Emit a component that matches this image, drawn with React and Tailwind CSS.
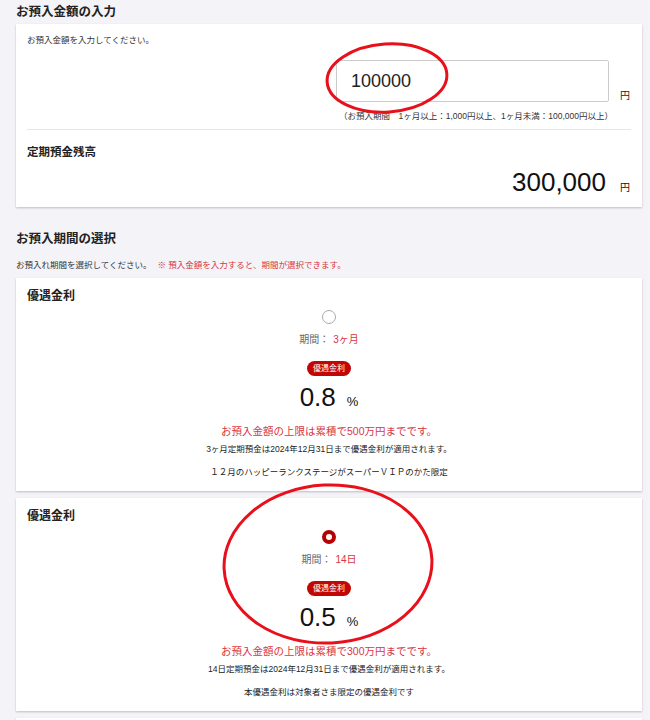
import React from "react";

const font = "font-['Liberation_Sans','Noto_Sans_CJK_JP',sans-serif]";

const plans = [
  {
    period: "3ヶ月",
    rate: "0.8",
    selected: false,
    limit: "お預入金額の上限は累積で500万円までです。",
    note: "3ヶ月定期預金は2024年12月31日まで優遇金利が適用されます。",
    target: "１２月のハッピーランクステージがスーパーＶＩＰのかた限定",
  },
  {
    period: "14日",
    rate: "0.5",
    selected: true,
    limit: "お預入金額の上限は累積で300万円までです。",
    note: "14日定期預金は2024年12月31日まで優遇金利が適用されます。",
    target: "本優遇金利は対象者さま限定の優遇金利です",
  },
];

function Card({ className = "", children }) {
  return (
    <div className={`bg-white shadow-[0_1px_2px_rgba(0,0,0,0.22)] ${className}`}>
      {children}
    </div>
  );
}

function PlanCard({ plan }) {
  return (
    <Card className="h-[213px] px-[11px] pt-[10px]">
      <h3 className="text-[12px] leading-[16px] font-bold text-[#222]">優遇金利</h3>
      <div className="flex flex-col items-center">
        {plan.selected ? (
          <span className="mt-[6px] w-[14px] h-[14px] rounded-full border-[4px] border-[#b80000] bg-white" />
        ) : (
          <span className="mt-[6px] w-[14px] h-[14px] rounded-full border-[1.5px] border-[#aaa] bg-white" />
        )}
        <p className="mt-[9px] text-[10px] leading-[14px] text-[#666]">
          期間：<span className="ml-[4px] text-[#d9363e]">{plan.period}</span>
        </p>
        <span className="mt-[14px] h-[15px] px-[6px] rounded-full bg-[#c20606] text-white text-[8px] leading-[15px]">
          優遇金利
        </span>
        <div className="mt-[6px] flex items-baseline gap-[11px] text-[#111]">
          <span className="text-[26px] leading-[30px]">{plan.rate}</span>
          <span className="text-[13px]">%</span>
        </div>
        <p className="mt-[11px] text-[10.5px] leading-[16px] text-[#d9363e]">{plan.limit}</p>
        <p className="mt-[4px] text-[8.5px] leading-[12px] text-[#222]">{plan.note}</p>
        <p className="mt-[11px] text-[8.5px] leading-[12px] text-[#222]">{plan.target}</p>
      </div>
    </Card>
  );
}

export default function App() {
  return (
    <div className={`relative h-screen bg-[#f4f4f8] pl-4 pr-2 pt-1 ${font} overflow-hidden`}>
      <h2 className="text-[12.5px] leading-[16px] font-bold text-[#222]">お預入金額の入力</h2>

      <Card className="mt-1 px-[11px] pt-[10px] pb-[10px]">
        <p className="text-[8.5px] leading-[12px] text-[#333]">お預入金額を入力してください。</p>
        <div className="mt-[14px] flex items-end justify-end">
          <div className="w-[273px] h-[42px] border border-[#ccc] rounded-[2px] bg-white flex items-center pl-[14px] text-[18px] text-[#222]">
            100000
          </div>
          <span className="ml-[11px] mr-[1px] text-[10px] leading-[12px] text-[#222]">円</span>
        </div>
        <p className="mt-[8px] pr-[18px] text-right text-[8.5px] leading-[12px] text-[#333]">
          （お預入期間　1ヶ月以上：1,000円以上、1ヶ月未満：100,000円以上）
        </p>
        <div className="mt-[7px] border-t border-[#e6e6e6]" />
        <h3 className="mt-[15px] text-[11.5px] leading-[14px] font-bold text-[#222]">定期預金残高</h3>
        <div className="mt-[8px] flex items-baseline justify-end gap-[14px] pr-[1px] text-[#111]">
          <span className="text-[26px] leading-[30px]">300,000</span>
          <span className="text-[10px]">円</span>
        </div>
      </Card>

      <h2 className="mt-[24px] text-[12.5px] leading-[16px] font-bold text-[#222]">お預入期間の選択</h2>
      <p className="mt-[12px] text-[8.5px] leading-[12px] text-[#333]">
        お預入れ期間を選択してください。
        <span className="ml-[6px] text-[#d9363e]">※ 預入金額を入力すると、期間が選択できます。</span>
      </p>

      <div className="mt-[7px] flex flex-col gap-[7px]">
        {plans.map((p) => (
          <PlanCard key={p.period} plan={p} />
        ))}
        <Card className="h-[40px]" />
      </div>

      {/* hand-drawn annotations */}
      <svg className="absolute inset-0 pointer-events-none" width="650" height="720">
        <ellipse cx="387" cy="78" rx="60" ry="34" transform="rotate(-4 387 78)" fill="none" stroke="#e8101a" strokeWidth="3" />
        <ellipse cx="328" cy="564" rx="104" ry="79" transform="rotate(-3 328 564)" fill="none" stroke="#e8101a" strokeWidth="3" />
      </svg>
    </div>
  );
}
